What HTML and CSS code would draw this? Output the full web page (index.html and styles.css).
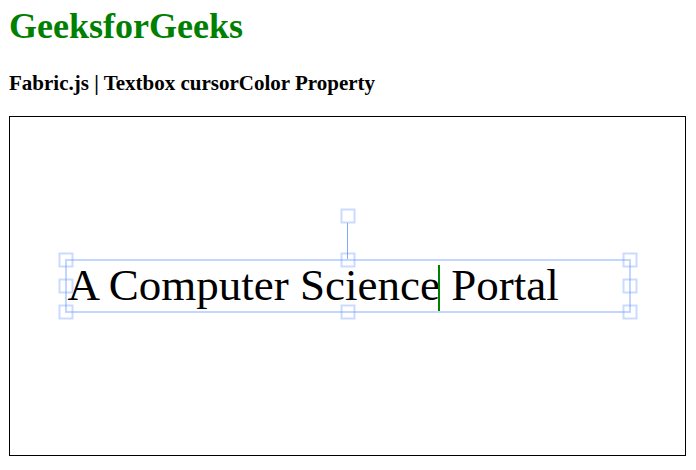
FILE: index.html
```html
<!DOCTYPE html>
<html>
<head>
<meta charset="utf-8">
<title>Fabric.js | Textbox cursorColor Property</title>
<link rel="stylesheet" href="styles.css">
</head>
<body>
  <h1 class="title">GeeksforGeeks</h1>
  <h3 class="subtitle">Fabric.js | Textbox cursorColor Property</h3>
  <div class="canvas">
    <div class="text">A Computer Science<span class="caret"></span> Portal</div>
    <div class="selection"></div>
    <div class="rot-line"></div>
    <div class="handle h-rot"></div>
    <div class="handle h-tl"></div>
    <div class="handle h-tm"></div>
    <div class="handle h-tr"></div>
    <div class="handle h-ml"></div>
    <div class="handle h-mr"></div>
    <div class="handle h-bl"></div>
    <div class="handle h-bm"></div>
    <div class="handle h-br"></div>
  </div>
</body>
</html>
```

FILE: styles.css
```css
html, body {
  background: #fff;
}
body {
  margin: 0 9px;
  font-family: "Liberation Serif", "Times New Roman", serif;
  color: #000;
}
.title {
  margin: 6px 0 24px;
  font-size: 36px;
  line-height: 41px;
  font-weight: bold;
  color: green;
}
.subtitle {
  margin: 0 0 21px;
  font-size: 21px;
  line-height: 24px;
  font-weight: bold;
}
.canvas {
  position: relative;
  width: 675px;
  height: 338px;
  border: 1px solid #000;
  overflow: hidden;
}
.text {
  position: absolute;
  left: 57.5px;
  top: 142px;
  font-family: "Liberation Serif", "Times New Roman", serif;
  font-size: 45px;
  line-height: 52px;
  white-space: nowrap;
  color: #000;
}
.caret {
  position: relative;
}
.caret::after {
  content: "";
  position: absolute;
  left: -2px;
  top: 5px;
  width: 2px;
  height: 46px;
  background: green;
}
.selection {
  position: absolute;
  left: 55px;
  top: 142px;
  width: 566px;
  height: 54px;
  box-sizing: border-box;
  border: 2px solid rgba(102, 153, 255, 0.4);
}
.rot-line {
  position: absolute;
  left: 337px;
  top: 106px;
  width: 1px;
  height: 36px;
  background: rgba(102, 153, 255, 0.85);
}
.handle {
  position: absolute;
  width: 15px;
  height: 15px;
  box-sizing: border-box;
  border: 2px solid rgba(102, 153, 255, 0.35);
  transform: translate(-50%, -50%);
}
.h-rot { left: 338px; top: 99px; }
.h-tl { left: 56px; top: 143px; }
.h-tm { left: 338px; top: 143px; }
.h-tr { left: 620px; top: 143px; }
.h-ml { left: 56px; top: 169px; }
.h-mr { left: 620px; top: 169px; }
.h-bl { left: 56px; top: 195px; }
.h-bm { left: 338px; top: 195px; }
.h-br { left: 620px; top: 195px; }
```
